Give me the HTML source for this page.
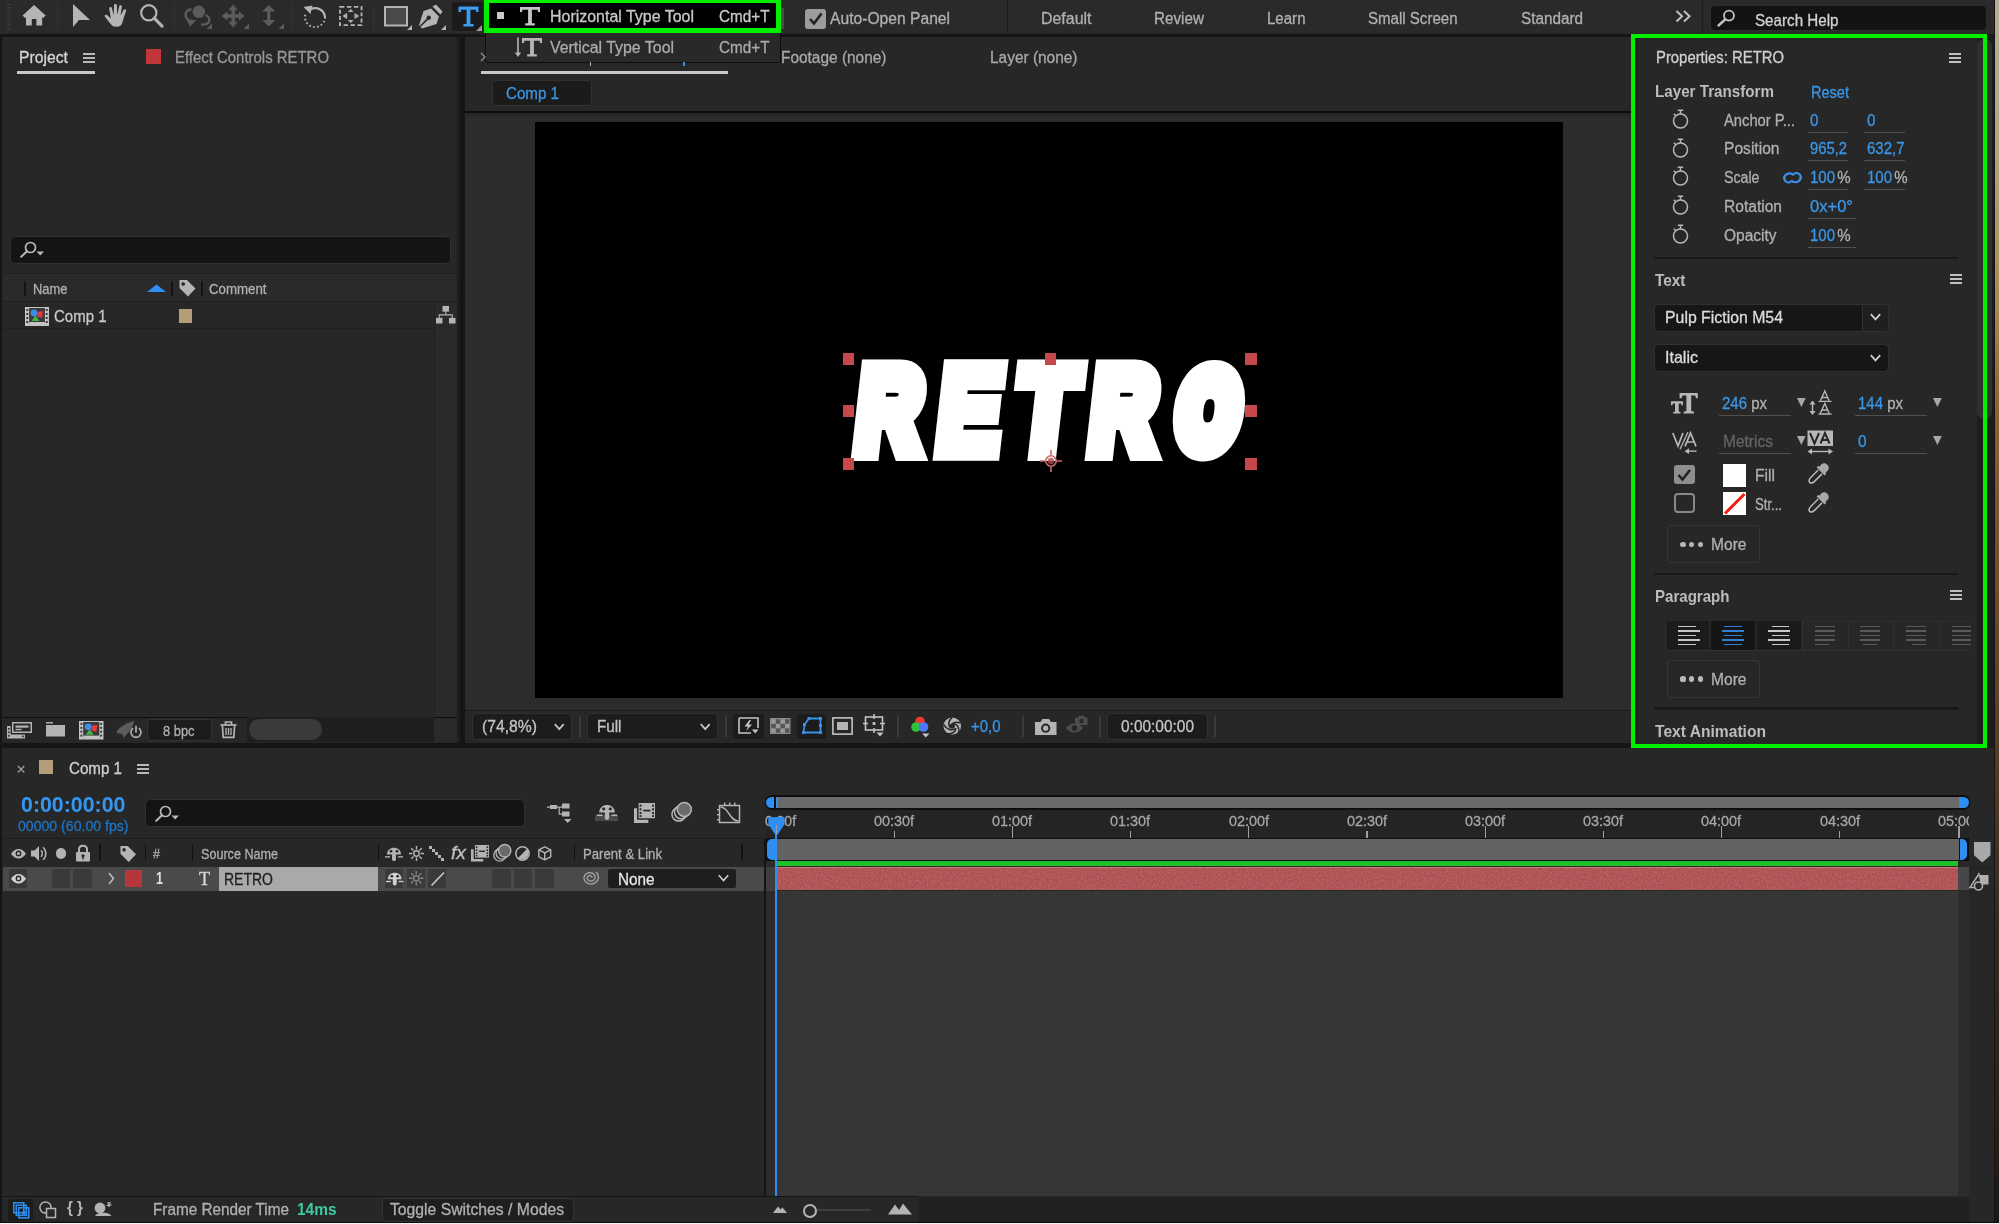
<!DOCTYPE html>
<html><head><meta charset="utf-8"><title>After Effects</title><style>
html,body{margin:0;padding:0;background:#151515;}
body{width:1999px;height:1224px;overflow:hidden;position:relative;font-family:"Liberation Sans",sans-serif;}
#r{position:absolute;left:0;top:0;width:1999px;height:1224px;overflow:hidden;}
#r div,#r svg,#r span.t{position:absolute;}
#r svg{overflow:visible;}
.t{white-space:pre;transform-origin:0 50%;-webkit-text-stroke:0.3px currentColor;}
#retro span{position:absolute;white-space:pre;color:#fff;font-family:"Liberation Sans",sans-serif;font-weight:700;transform-origin:0 0;-webkit-text-stroke:20px #fff;paint-order:stroke fill;}
</style></head><body><div id="r">
<div style="left:0.00px;top:0.00px;width:1999.00px;height:1224.00px;background:#151515;"></div>
<div style="left:0.00px;top:0.00px;width:1995.00px;height:33.50px;background:#2a2a2a;"></div>
<div style="left:2.00px;top:37.00px;width:457.50px;height:705.50px;background:#272727;"></div>
<div style="left:465.00px;top:37.00px;width:1167.00px;height:705.50px;background:#272727;"></div>
<div style="left:1631.00px;top:37.00px;width:364.00px;height:711.00px;background:#1c1c1c;"></div>
<div style="left:2.00px;top:748.00px;width:1992.00px;height:474.00px;background:#272727;"></div>
<div style="left:1995.00px;top:0.00px;width:4.00px;height:1224.00px;background:linear-gradient(#b5ad98 0px,#b0a482 150px,#a58a50 306px,#8c6438 400px,#7c5632 500px,#6a492c 612px,#553b27 760px,#38291f 918px,#2a211b 1100px,#1c1714 1224px);"></div>
<div style="left:1993.50px;top:0.00px;width:1.80px;height:1224.00px;background:#151311;"></div>
<div style="left:0.00px;top:1222.60px;width:1999.00px;height:1.40px;background:#f4f4f4;"></div>
<div style="left:0.00px;top:1221.50px;width:1999.00px;height:1.10px;background:#0c0c0c;"></div>
<div style="left:7.00px;top:4.00px;width:4.00px;height:1.20px;background:#3b3b3b;"></div>
<div style="left:7.00px;top:6.50px;width:4.00px;height:1.20px;background:#3b3b3b;"></div>
<div style="left:7.00px;top:9.00px;width:4.00px;height:1.20px;background:#3b3b3b;"></div>
<div style="left:7.00px;top:11.50px;width:4.00px;height:1.20px;background:#3b3b3b;"></div>
<div style="left:7.00px;top:14.00px;width:4.00px;height:1.20px;background:#3b3b3b;"></div>
<div style="left:7.00px;top:16.50px;width:4.00px;height:1.20px;background:#3b3b3b;"></div>
<div style="left:7.00px;top:19.00px;width:4.00px;height:1.20px;background:#3b3b3b;"></div>
<div style="left:7.00px;top:21.50px;width:4.00px;height:1.20px;background:#3b3b3b;"></div>
<div style="left:7.00px;top:24.00px;width:4.00px;height:1.20px;background:#3b3b3b;"></div>
<div style="left:7.00px;top:26.50px;width:4.00px;height:1.20px;background:#3b3b3b;"></div>
<div style="left:7.00px;top:29.00px;width:4.00px;height:1.20px;background:#3b3b3b;"></div>
<svg style="left:22.00px;top:4.40px;" width="24.20" height="22.00" viewBox="0 0 24 22" preserveAspectRatio="none"><path d="M12 1 L0.5 11.5 L3 14 L4 13 L4 21.5 L9.7 21.5 L9.7 15 L14.3 15 L14.3 21.5 L20 21.5 L20 13 L21 14 L23.5 11.5 Z" fill="#b4b4b4"/></svg>
<div style="left:57.00px;top:3.00px;width:1.00px;height:28.00px;background:#333;"></div>
<svg style="left:72.00px;top:3.20px;" width="19.00" height="25.00" viewBox="0 0 19 25" preserveAspectRatio="none"><path d="M1 1 L1 24 L7 17 L18 17 Z" fill="#b4b4b4"/></svg>
<svg style="left:103.50px;top:3.20px;" width="25.00" height="24.00" viewBox="0 0 24 24" preserveAspectRatio="none"><g fill="#b4b4b4"><path d="M9 23.5 C6 21 3.5 17 0.8 13.5 C0 12.3 1.8 11 3.2 12.2 L6.5 15.5 L5 5.5 C4.8 3.6 7.2 3.3 7.6 5.2 L9.2 12 L9.6 2.5 C9.7 0.6 12.3 0.6 12.4 2.5 L12.6 11.8 L14.6 3.4 C15 1.6 17.5 2.1 17.2 4 L15.8 12.6 L18.8 7 C19.7 5.4 21.9 6.5 21.2 8.2 C19.8 12 18.6 15.5 17.8 19 C17.3 21.5 16 23.5 13 23.8 Z"/></g></svg>
<svg style="left:139.00px;top:3.30px;" width="25.50" height="24.50" viewBox="0 0 26 25" preserveAspectRatio="none"><circle cx="10" cy="10" r="7.8" fill="none" stroke="#b4b4b4" stroke-width="2.2"/><path d="M15.5 15.5 L23.5 23.5" stroke="#b4b4b4" stroke-width="3.2" stroke-linecap="round"/></svg>
<div style="left:174.00px;top:3.00px;width:1.00px;height:28.00px;background:#333;"></div>
<svg style="left:183.00px;top:4.00px;" width="29.00" height="25.00" viewBox="0 0 29 25" preserveAspectRatio="none"><circle cx="15.8" cy="7.8" r="6.2" fill="#5c5c5c"/><g fill="none" stroke="#5c5c5c" stroke-width="2.4"><path d="M8.5 5.2 C0.5 6.5 1 14.5 7.5 17"/><path d="M22.5 11 C28.5 13.5 27.5 21.5 18 20.5"/></g><path d="M3.2 15.2 L13.2 16.2 L7 22.5 Z" fill="#5c5c5c"/><path d="M29 19.5 L29 25 L23.5 25 Z" fill="#5c5c5c"/></svg>
<svg style="left:221.00px;top:4.00px;" width="28.00" height="25.00" viewBox="0 0 28 25" preserveAspectRatio="none"><g fill="#5c5c5c"><path d="M12.2 0.5 L17 6.3 L13.9 6.3 L13.9 10.3 L17.9 10.3 L17.9 7.2 L23.7 12 L17.9 16.8 L17.9 13.7 L13.9 13.7 L13.9 17.7 L17 17.7 L12.2 23.5 L7.4 17.7 L10.5 17.7 L10.5 13.7 L6.5 13.7 L6.5 16.8 L0.7 12 L6.5 7.2 L6.5 10.3 L10.5 10.3 L10.5 6.3 L7.4 6.3 Z"/><path d="M28 19.5 L28 25 L22.5 25 Z"/></g></svg>
<svg style="left:259.00px;top:4.00px;" width="25.00" height="25.00" viewBox="0 0 25 25" preserveAspectRatio="none"><g fill="#5c5c5c"><path d="M9.8 1 L16.4 7.5 L11.4 7.5 L11.4 16 L16.4 16 L9.8 22.5 L3.2 16 L8.2 16 L8.2 7.5 L3.2 7.5 Z"/><path d="M25 19.5 L25 25 L19.5 25 Z"/></g></svg>
<div style="left:292.00px;top:3.00px;width:1.00px;height:28.00px;background:#333;"></div>
<svg style="left:302.00px;top:4.00px;" width="26.00" height="25.00" viewBox="0 0 26 25" preserveAspectRatio="none"><path d="M8.5 5.2 A10 10 0 0 1 23 13" fill="none" stroke="#b4b4b4" stroke-width="2.2"/><path d="M1.5 3 L10.5 1.5 L8.5 10 Z" fill="#b4b4b4"/><path d="M23 13 A10 10 0 1 1 3.5 10" fill="none" stroke="#b4b4b4" stroke-width="2" stroke-dasharray="1.6 2.4"/></svg>
<svg style="left:338.50px;top:6.00px;" width="23.50" height="20.00" viewBox="0 0 24 23" preserveAspectRatio="none"><g fill="none" stroke="#b4b4b4" stroke-width="1.9" stroke-dasharray="4.5 2.6"><rect x="1" y="1" width="22" height="21"/></g><g fill="#b4b4b4"><path d="M12 3.5 L15 7 L9 7 Z"/><path d="M12 19.5 L15 16 L9 16 Z"/><path d="M3.5 11.5 L7 8.5 L7 14.5 Z"/><path d="M20.5 11.5 L17 8.5 L17 14.5 Z"/><rect x="7" y="8.5" width="1.3" height="6"/><rect x="15.7" y="8.5" width="1.3" height="6"/></g></svg>
<div style="left:373.00px;top:3.00px;width:1.00px;height:28.00px;background:#333;"></div>
<svg style="left:383.00px;top:5.00px;" width="29.00" height="25.00" viewBox="0 0 29 25" preserveAspectRatio="none"><rect x="2" y="2" width="22" height="18.5" fill="#4a4a4a" stroke="#b4b4b4" stroke-width="2"/><path d="M29 20 L29 25 L24 25 Z" fill="#b4b4b4"/></svg>
<svg style="left:419.00px;top:4.00px;" width="27.00" height="26.00" viewBox="0 0 27 26" preserveAspectRatio="none"><g fill="#b4b4b4"><path d="M13.5 2.5 L17 0.5 L23.5 7.5 L21.5 10.5 Z"/><path d="M12 4.5 L20 12.5 L17.5 20 L3 24.5 L1.5 23 L9 15.8 A2.2 2.2 0 1 0 7.7 14.5 L0.6 22 L0 21.5 L4.5 7 Z"/><path d="M27 21 L27 26 L22 26 Z"/></g></svg>
<div style="left:452.00px;top:2.00px;width:31.00px;height:29.00px;background:#1b1b1b;border-radius:3px;"></div>
<svg style="left:457.50px;top:5.50px;" width="21.00" height="21.00" viewBox="0 0 21 21" preserveAspectRatio="none"><path d="M0.5 0.5 L20.5 0.5 L20.5 6 L18 6 L18 3.8 L12.4 3.8 L12.4 18 L15.6 18 L15.6 20.5 L5.4 20.5 L5.4 18 L8.6 18 L8.6 3.8 L3 3.8 L3 6 L0.5 6 Z" fill="#3d9bf0"/></svg>
<svg style="left:476.00px;top:25.00px;" width="6.00" height="6.00" viewBox="0 0 6 6" preserveAspectRatio="none"><path d="M6 0 L6 6 L0 6 Z" fill="#9a9a9a"/></svg>
<div style="left:484.50px;top:30.00px;width:296.00px;height:32.80px;background:#0d0d0d;border-radius:0 0 3px 3px;"></div>
<div style="left:486.00px;top:30.00px;width:293.50px;height:31.50px;background:#292929;"></div>
<div style="left:483.60px;top:-2.00px;width:297.00px;height:35.00px;background:#000;box-sizing:border-box;border:5px solid #00f000;"></div>
<div style="left:496.50px;top:12.30px;width:7.30px;height:6.50px;background:#cacaca;"></div>
<svg style="left:519.00px;top:6.00px;" width="22.00" height="20.00" viewBox="0 0 22 20" preserveAspectRatio="none"><path d="M1 1 L21 1 L21 6 L18.8 6 L18.8 3.8 L12.9 3.8 L12.9 17.2 L15.8 17.2 L15.8 19.6 L6.2 19.6 L6.2 17.2 L9.1 17.2 L9.1 3.8 L3.2 3.8 L3.2 6 L1 6 Z" fill="#c4c4c4"/></svg>
<span class="t" style="left:550.00px;top:6.50px;font-size:16px;line-height:20px;color:#c8c8c8;transform:scaleX(0.9973);">Horizontal Type Tool</span>
<span class="t" style="left:719.00px;top:6.50px;font-size:16px;line-height:20px;color:#c8c8c8;transform:scaleX(0.9546);">Cmd+T</span>
<svg style="left:514.00px;top:37.00px;" width="28.00" height="21.00" viewBox="0 0 28 21" preserveAspectRatio="none"><path d="M8 1 L28 1 L28 6 L25.8 6 L25.8 3.8 L19.9 3.8 L19.9 17.2 L22.8 17.2 L22.8 19.6 L13.2 19.6 L13.2 17.2 L16.1 17.2 L16.1 3.8 L10.2 3.8 L10.2 6 L8 6 Z" fill="#b4b4b4"/><path d="M3.2 0.5 L4.8 0.5 L4.8 15.5 L7.2 15.5 L4 20 L0.8 15.5 L3.2 15.5 Z" fill="#b4b4b4"/></svg>
<span class="t" style="left:550.00px;top:37.50px;font-size:16px;line-height:20px;color:#aaaaaa;transform:scaleX(0.9934);">Vertical Type Tool</span>
<span class="t" style="left:719.00px;top:37.50px;font-size:16px;line-height:20px;color:#aaaaaa;transform:scaleX(0.9546);">Cmd+T</span>
<div style="left:781.00px;top:8.00px;width:2.50px;height:21.00px;background:#4a4a4a;"></div>
<div style="left:805.00px;top:9.00px;width:21.00px;height:19.50px;background:#9c9c9c;border-radius:3px;"></div>
<svg style="left:805.00px;top:9.00px;" width="21.00" height="19.50" viewBox="0 0 21 19.5" preserveAspectRatio="none"><path d="M5 10 L9 14.5 L16.5 4.5" fill="none" stroke="#222" stroke-width="2.6"/></svg>
<span class="t" style="left:830.00px;top:9.00px;font-size:16px;line-height:20px;color:#b0b0b0;transform:scaleX(0.9776);">Auto-Open Panel</span>
<div style="left:1007.00px;top:0.00px;width:1.00px;height:33.00px;background:#1c1c1c;"></div>
<span class="t" style="left:1040.50px;top:9.00px;font-size:16px;line-height:20px;color:#b0b0b0;transform:scaleX(0.9961);">Default</span>
<span class="t" style="left:1154.00px;top:9.00px;font-size:16px;line-height:20px;color:#b0b0b0;transform:scaleX(0.9531);">Review</span>
<span class="t" style="left:1267.00px;top:9.00px;font-size:16px;line-height:20px;color:#b0b0b0;transform:scaleX(0.9408);">Learn</span>
<span class="t" style="left:1368.00px;top:9.00px;font-size:16px;line-height:20px;color:#b0b0b0;transform:scaleX(0.9406);">Small Screen</span>
<span class="t" style="left:1521.00px;top:9.00px;font-size:16px;line-height:20px;color:#b0b0b0;transform:scaleX(0.9547);">Standard</span>
<svg style="left:1675.00px;top:10.00px;" width="16.00" height="12.50" viewBox="0 0 16 12" preserveAspectRatio="none"><path d="M1.5 1 L7 6 L1.5 11 M9 1 L14.5 6 L9 11" fill="none" stroke="#c0c0c0" stroke-width="2"/></svg>
<div style="left:1702.00px;top:0.00px;width:1.00px;height:33.00px;background:#1c1c1c;"></div>
<div style="left:1711.00px;top:6.00px;width:275.00px;height:24.00px;background:#131313;border-radius:4px;box-shadow:0 0 0 1px #2d2d2d;"></div>
<svg style="left:1717.00px;top:9.00px;" width="19.00" height="18.00" viewBox="0 0 19 18" preserveAspectRatio="none"><circle cx="12" cy="6.6" r="5" fill="none" stroke="#c4c4c4" stroke-width="1.8"/><path d="M8.3 10.3 L1.5 16.5" stroke="#c4c4c4" stroke-width="2.4" stroke-linecap="round"/></svg>
<span class="t" style="left:1754.50px;top:9.50px;font-size:16.5px;line-height:21px;color:#d2d2d2;transform:scaleX(0.9196);">Search Help</span>
<span class="t" style="left:19.00px;top:47.00px;font-size:16.5px;line-height:21px;color:#d6d6d6;transform:scaleX(0.9541);">Project</span>
<div style="left:83.00px;top:53.00px;width:12.00px;height:2.00px;background:#b8b8b8;"></div>
<div style="left:83.00px;top:57.00px;width:12.00px;height:2.00px;background:#b8b8b8;"></div>
<div style="left:83.00px;top:61.00px;width:12.00px;height:2.00px;background:#b8b8b8;"></div>
<div style="left:17.00px;top:71.00px;width:78.00px;height:3.00px;background:#c8c8c8;"></div>
<div style="left:146.00px;top:49.00px;width:14.50px;height:14.50px;background:#c0373b;"></div>
<span class="t" style="left:175.00px;top:47.50px;font-size:16px;line-height:20px;color:#989898;transform:scaleX(0.9328);">Effect Controls RETRO</span>
<div style="left:11.00px;top:237.00px;width:439.00px;height:26.00px;background:#141414;border-radius:4px;box-shadow:0 0 0 1px #303030;"></div>
<svg style="left:20.00px;top:241.00px;" width="26.00" height="17.00" viewBox="0 0 26 17" preserveAspectRatio="none"><circle cx="10.5" cy="6.5" r="5" fill="none" stroke="#b8b8b8" stroke-width="1.7"/><path d="M7 10.3 L1.2 15.8" stroke="#b8b8b8" stroke-width="2" stroke-linecap="round"/><path d="M16.5 10.5 L24 10.5 L20.2 14.5 Z" fill="#b8b8b8"/></svg>
<div style="left:3.00px;top:272.50px;width:454.00px;height:1.50px;background:#1f1f1f;"></div>
<div style="left:3.00px;top:274.00px;width:454.00px;height:27.00px;background:#2a2a2a;"></div>
<div style="left:3.00px;top:301.00px;width:454.00px;height:1.00px;background:#202020;"></div>
<div style="left:24.00px;top:280.50px;width:1.50px;height:15.50px;background:#141414;"></div>
<span class="t" style="left:33.00px;top:280.00px;font-size:14.5px;line-height:18px;color:#b0b0b0;transform:scaleX(0.8919);">Name</span>
<svg style="left:147.00px;top:284.00px;" width="19.00" height="9.00" viewBox="0 0 19 9" preserveAspectRatio="none"><path d="M0 8 L9.5 0.5 L19 8 Z" fill="#2f8ff0"/></svg>
<div style="left:171.00px;top:280.50px;width:1.50px;height:15.50px;background:#141414;"></div>
<svg style="left:177.50px;top:278.50px;" width="18.50" height="18.50" viewBox="0 0 18.5 18.5" preserveAspectRatio="none"><path d="M1.5 1 L9 1 L17.5 9.5 L10 17.5 L1.5 9 Z M5.2 3.2 A1.8 1.8 0 1 0 5.21 3.2 Z" fill="#b4b4b4" fill-rule="evenodd"/></svg>
<div style="left:201.00px;top:280.50px;width:1.50px;height:15.50px;background:#141414;"></div>
<span class="t" style="left:209.00px;top:280.00px;font-size:14.5px;line-height:18px;color:#b0b0b0;transform:scaleX(0.9148);">Comment</span>
<svg style="left:25.00px;top:306.50px;" width="24.00" height="19.00" viewBox="0 0 24 19" preserveAspectRatio="none"><rect x="0.5" y="0.5" width="23" height="18" fill="#3a3a3a" stroke="#c4c4c4" stroke-width="1"/>
<rect x="0.5" y="0.5" width="3.6" height="18" fill="#c4c4c4"/><rect x="19.9" y="0.5" width="3.6" height="18" fill="#c4c4c4"/>
<g fill="#333"><rect x="1.4" y="2" width="1.8" height="2"/><rect x="1.4" y="6" width="1.8" height="2"/><rect x="1.4" y="10" width="1.8" height="2"/><rect x="1.4" y="14" width="1.8" height="2"/><rect x="20.8" y="2" width="1.8" height="2"/><rect x="20.8" y="6" width="1.8" height="2"/><rect x="20.8" y="10" width="1.8" height="2"/><rect x="20.8" y="14" width="1.8" height="2"/></g>
<rect x="4.1" y="15" width="15.8" height="3.5" fill="#c4c4c4"/>
<circle cx="9" cy="6" r="3.4" fill="#3a8fe8"/><path d="M12 5 L18 4 L17 11 L12.5 10 Z" fill="#e03a3a"/><path d="M10.5 8.5 L14.5 14 L6.5 14 Z" fill="#3fb84a"/></svg>
<span class="t" style="left:53.50px;top:306.00px;font-size:17px;line-height:21px;color:#c8c8c8;transform:scaleX(0.8820);">Comp 1</span>
<div style="left:178.50px;top:309.00px;width:13.50px;height:13.50px;background:#b49e7a;"></div>
<div style="left:3.00px;top:328.00px;width:431.00px;height:1.00px;background:#1f1f1f;"></div>
<div style="left:434.00px;top:302.00px;width:23.00px;height:440.00px;background:#2a2a2a;"></div>
<div style="left:433.50px;top:302.00px;width:1.00px;height:415.00px;background:#202020;"></div>
<svg style="left:436.00px;top:306.00px;" width="19.50" height="17.50" viewBox="0 0 19.5 17" preserveAspectRatio="none"><g fill="#b4b4b4"><rect x="6.5" y="0" width="6.5" height="5.5"/><rect x="0" y="11.5" width="6.5" height="5.5"/><rect x="13" y="11.5" width="6.5" height="5.5"/><path d="M9.2 5 L10.3 5 L10.3 8 L16.8 8 L16.8 12 L15.7 12 L15.7 9.2 L3.8 9.2 L3.8 12 L2.7 12 L2.7 8 L9.2 8 Z"/></g></svg>
<div style="left:457.00px;top:37.00px;width:2.50px;height:705.50px;background:#1d1d1d;"></div>
<div style="left:3.00px;top:716.50px;width:244.00px;height:1.50px;background:#0e0e0e;"></div>
<div style="left:434.00px;top:716.50px;width:23.00px;height:1.50px;background:#0e0e0e;"></div>
<div style="left:247.00px;top:717.00px;width:187.00px;height:25.00px;background:#1f1f1f;"></div>
<div style="left:249.00px;top:718.50px;width:73.00px;height:21.50px;background:#3a3a3a;border-radius:11px;"></div>
<svg style="left:6.50px;top:722.00px;" width="25.00" height="16.50" viewBox="0 0 25 16.5" preserveAspectRatio="none"><g fill="#b4b4b4"><path d="M5 0 L25 0 L25 11 L5 11 Z M6.5 1.5 L6.5 9.5 L23.5 9.5 L23.5 1.5 Z" fill-rule="evenodd"/><rect x="8.5" y="3.5" width="13" height="2.2"/><rect x="8.5" y="6.8" width="6" height="1.4"/><path d="M0 4 L3.6 4 L3.6 12.4 L18 12.4 L18 16.5 L0 16.5 Z"/></g><g fill="#272727"><rect x="1" y="6" width="1.6" height="1.6"/><rect x="1" y="9.5" width="1.6" height="1.6"/><rect x="1" y="13" width="1.6" height="1.6"/><rect x="15" y="13.6" width="1.6" height="1.6"/></g></svg>
<svg style="left:45.50px;top:721.50px;" width="19.00" height="14.50" viewBox="0 0 19 14.5" preserveAspectRatio="none"><path d="M0 0 L7 0 L7 1.5 L0 1.5 Z M0 3 L19 3 L19 14.5 L0 14.5 Z" fill="#b4b4b4"/></svg>
<svg style="left:79.00px;top:721.00px;" width="24.50" height="18.50" viewBox="0 0 24 19" preserveAspectRatio="none"><rect x="0.5" y="0.5" width="23" height="18" fill="#3a3a3a" stroke="#c4c4c4" stroke-width="1"/>
<rect x="0.5" y="0.5" width="3.6" height="18" fill="#c4c4c4"/><rect x="19.9" y="0.5" width="3.6" height="18" fill="#c4c4c4"/>
<g fill="#333"><rect x="1.4" y="2" width="1.8" height="2"/><rect x="1.4" y="6" width="1.8" height="2"/><rect x="1.4" y="10" width="1.8" height="2"/><rect x="1.4" y="14" width="1.8" height="2"/><rect x="20.8" y="2" width="1.8" height="2"/><rect x="20.8" y="6" width="1.8" height="2"/><rect x="20.8" y="10" width="1.8" height="2"/><rect x="20.8" y="14" width="1.8" height="2"/></g>
<rect x="4.1" y="15" width="15.8" height="3.5" fill="#c4c4c4"/>
<circle cx="9" cy="6" r="3.4" fill="#3a8fe8"/><path d="M12 5 L18 4 L17 11 L12.5 10 Z" fill="#e03a3a"/><path d="M10.5 8.5 L14.5 14 L6.5 14 Z" fill="#3fb84a"/></svg>
<svg style="left:116.00px;top:720.00px;" width="25.50" height="19.00" viewBox="0 0 25.5 19" preserveAspectRatio="none"><path d="M1 11 C5 6 10 3 18 1 C17 7 14 12 9 16 L7.5 18 L6.5 14.5 L3.5 13.5 L0.5 13 Z" fill="#5c5c5c"/><path d="M20 6.5 L20 12" stroke="#a8a8a8" stroke-width="1.8" stroke-linecap="round"/><path d="M16.6 8.6 A5 5 0 1 0 23.4 8.6" fill="none" stroke="#a8a8a8" stroke-width="1.8" stroke-linecap="round"/></svg>
<div style="left:147.50px;top:720.00px;width:63.00px;height:19.50px;background:#1c1c1c;border-radius:3px;box-shadow:0 0 0 1px #333;"></div>
<span class="t" style="left:163.00px;top:721.50px;font-size:14.5px;line-height:18px;color:#b0b0b0;transform:scaleX(0.8880);">8 bpc</span>
<svg style="left:220.00px;top:720.50px;" width="17.00" height="17.50" viewBox="0 0 17 17.5" preserveAspectRatio="none"><g fill="none" stroke="#b4b4b4" stroke-width="1.7"><path d="M0.5 4 L16.5 4"/><path d="M5.5 3.6 L5.5 1 L11.5 1 L11.5 3.6"/><path d="M2.4 4.5 L3.2 16.4 L13.8 16.4 L14.6 4.5"/><path d="M6 7 L6 14 M8.5 7 L8.5 14 M11 7 L11 14" stroke-width="1.3"/></g></svg>
<svg style="left:480.00px;top:52.00px;" width="6.00" height="10.00" viewBox="0 0 6 10" preserveAspectRatio="none"><path d="M1 1 L5 5 L1 9" fill="none" stroke="#8a8a8a" stroke-width="1.4"/></svg>
<div style="left:481.00px;top:71.00px;width:247.00px;height:3.00px;background:#c8c8c8;"></div>
<div style="left:589.50px;top:62.00px;width:1.50px;height:3.50px;background:#b0b0b0;"></div>
<div style="left:683.00px;top:62.00px;width:1.50px;height:4.00px;background:#3a8fe8;"></div>
<span class="t" style="left:780.50px;top:47.50px;font-size:16px;line-height:20px;color:#a8a8a8;transform:scaleX(0.9643);">Footage (none)</span>
<span class="t" style="left:989.50px;top:47.50px;font-size:16px;line-height:20px;color:#a8a8a8;transform:scaleX(0.9645);">Layer (none)</span>
<div style="left:493.00px;top:81.00px;width:98.00px;height:23.50px;background:#1b1b1b;border-radius:3px;box-shadow:0 0 0 1px #303030;"></div>
<span class="t" style="left:506.00px;top:83.00px;font-size:16.5px;line-height:21px;color:#3a96e6;transform:scaleX(0.9173);">Comp 1</span>
<div style="left:465.00px;top:111.00px;width:1167.00px;height:2.00px;background:#0c0c0c;"></div>
<div style="left:465.00px;top:113.00px;width:1167.00px;height:596.50px;background:#2c2c2c;background-image:linear-gradient(#242424 0,#2c2c2c 5px);"></div>
<div style="left:535.00px;top:122.00px;width:1027.50px;height:575.60px;background:#000;"></div>
<div style="left:465.00px;top:709.50px;width:1167.00px;height:1.50px;background:#1a1a1a;"></div>
<div id="retro" style="left:0;top:0;width:1999px;height:461.4px;transform-origin:0 461.4px;transform:skewX(-6.46deg);"><span style="left:852.06px;top:351.10px;font-size:118.46px;line-height:118.46px;-webkit-text-stroke-width:20.0px;transform:scaleX(0.7511);">R</span><span style="left:933.45px;top:349.27px;font-size:122.09px;line-height:122.09px;-webkit-text-stroke-width:17.5px;transform:scaleX(0.7733);">E</span><span style="left:1012.29px;top:349.64px;font-size:121.37px;line-height:121.37px;-webkit-text-stroke-width:18.0px;transform:scaleX(0.7969);">T</span><span style="left:1085.57px;top:351.10px;font-size:118.46px;line-height:118.46px;-webkit-text-stroke-width:20.0px;transform:scaleX(0.7564);">R</span><span style="left:1173.53px;top:357.75px;font-size:105.23px;line-height:105.23px;-webkit-text-stroke-width:27.0px;transform:scaleX(0.7112);">O</span></div>
<div style="left:842.50px;top:353.20px;width:11.60px;height:11.60px;background:#c8474a;"></div>
<div style="left:842.50px;top:405.20px;width:11.60px;height:11.60px;background:#c8474a;"></div>
<div style="left:842.50px;top:458.20px;width:11.60px;height:11.60px;background:#c8474a;"></div>
<div style="left:1044.70px;top:353.20px;width:11.60px;height:11.60px;background:#c8474a;"></div>
<div style="left:1245.20px;top:353.20px;width:11.60px;height:11.60px;background:#c8474a;"></div>
<div style="left:1245.20px;top:405.20px;width:11.60px;height:11.60px;background:#c8474a;"></div>
<div style="left:1245.20px;top:458.20px;width:11.60px;height:11.60px;background:#c8474a;"></div>
<svg style="left:1039.00px;top:449.00px;" width="24.00" height="24.00" viewBox="0 0 24 24" preserveAspectRatio="none"><g stroke="#d06a6c" fill="none" stroke-width="1.6"><circle cx="12" cy="12" r="5.2"/><path d="M12 1 L12 6 M12 18 L12 23 M1 12 L6 12 M18 12 L23 12"/></g><circle cx="12" cy="12" r="3.2" fill="#b84a4c" opacity="0.8"/></svg>
<div style="left:473.00px;top:714.00px;width:98.00px;height:24.50px;background:#1c1c1c;border-radius:4px;box-shadow:0 0 0 1px #313131;"></div>
<span class="t" style="left:482.00px;top:716.50px;font-size:16px;line-height:20px;color:#c4c4c4;transform:scaleX(0.9817);">(74,8%)</span>
<svg style="left:553.50px;top:722.61px;" width="10.50" height="7.78" viewBox="0 0 10.50 7.78" preserveAspectRatio="none"><path d="M0.8 1.2 L5.25 6.18 L9.70 1.2" fill="none" stroke="#c4c4c4" stroke-width="1.8"/></svg>
<div style="left:578.50px;top:716.00px;width:2.00px;height:21.00px;background:#3a3a3a;"></div>
<div style="left:588.00px;top:714.00px;width:128.50px;height:24.50px;background:#1c1c1c;border-radius:4px;box-shadow:0 0 0 1px #313131;"></div>
<span class="t" style="left:597.00px;top:716.50px;font-size:16px;line-height:20px;color:#c4c4c4;transform:scaleX(0.9503);">Full</span>
<svg style="left:699.50px;top:722.61px;" width="10.50" height="7.78" viewBox="0 0 10.50 7.78" preserveAspectRatio="none"><path d="M0.8 1.2 L5.25 6.18 L9.70 1.2" fill="none" stroke="#c4c4c4" stroke-width="1.8"/></svg>
<div style="left:724.50px;top:716.00px;width:2.00px;height:21.00px;background:#3a3a3a;"></div>
<div style="left:733.00px;top:713.50px;width:30.50px;height:25.50px;background:#1c1c1c;border-radius:3px;"></div>
<svg style="left:738.00px;top:716.50px;" width="21.00" height="17.50" viewBox="0 0 21 17.5" preserveAspectRatio="none"><path d="M1 1 L20 1 L20 11 M13 16 L1 16 L1 1" fill="none" stroke="#c4c4c4" stroke-width="1.6"/><path d="M11.5 3 L6.5 9.5 L10 9.5 L8 14 L14 7.5 L10.6 7.5 L13 3 Z" fill="#c4c4c4"/><path d="M14 12.5 L20.5 12.5 L17.2 16.5 Z" fill="#c4c4c4"/></svg>
<svg style="left:769.50px;top:718.00px;" width="20.50" height="16.00" viewBox="0 0 20.5 16" preserveAspectRatio="none"><rect x="0.6" y="0.6" width="19.3" height="14.8" fill="#555" stroke="#8a8a8a" stroke-width="1.2"/><g fill="#9a9a9a"><rect x="1.2" y="1.2" width="4.6" height="4.6"/><rect x="10.4" y="1.2" width="4.6" height="4.6"/><rect x="5.8" y="5.8" width="4.6" height="4.6"/><rect x="15" y="5.8" width="4.4" height="4.6"/><rect x="1.2" y="10.4" width="4.6" height="4.4"/><rect x="10.4" y="10.4" width="4.6" height="4.4"/></g></svg>
<div style="left:797.00px;top:713.50px;width:28.50px;height:25.50px;background:#1c1c1c;border-radius:3px;"></div>
<svg style="left:800.50px;top:716.00px;" width="22.00" height="19.00" viewBox="0 0 22 19" preserveAspectRatio="none"><path d="M2.5 16.5 L3.5 8.5 L8 2.5 L19.5 2.5 L19.5 16.5 Z" fill="none" stroke="#3a8fe8" stroke-width="1.8"/><g fill="#3a8fe8"><rect x="1" y="15" width="3" height="3"/><rect x="18" y="15" width="3" height="3"/><rect x="18" y="1" width="3" height="3"/><rect x="6.5" y="1" width="3" height="3"/><rect x="2" y="7" width="3" height="3"/><rect x="18" y="8" width="3" height="3"/></g></svg>
<svg style="left:832.00px;top:717.00px;" width="21.00" height="18.00" viewBox="0 0 21 18" preserveAspectRatio="none"><rect x="0.9" y="0.9" width="19.2" height="16.2" fill="none" stroke="#c4c4c4" stroke-width="1.6"/><rect x="5" y="5" width="11" height="8" fill="#b4b4b4"/></svg>
<svg style="left:863.00px;top:714.00px;" width="22.00" height="22.50" viewBox="0 0 22 22.5" preserveAspectRatio="none"><g stroke="#c4c4c4" stroke-width="1.6" fill="none"><rect x="2.5" y="3" width="17" height="13"/><path d="M11 0 L11 5 M11 14 L11 19 M0 9.5 L5 9.5 M17 9.5 L22 9.5"/></g><rect x="9.6" y="8.1" width="2.8" height="2.8" fill="#c4c4c4"/><path d="M13.5 18.5 L20.5 18.5 L17 22.5 Z" fill="#c4c4c4"/></svg>
<div style="left:896.50px;top:716.00px;width:2.00px;height:21.00px;background:#3a3a3a;"></div>
<svg style="left:911.00px;top:715.50px;" width="19.00" height="22.50" viewBox="0 0 19 22.5" preserveAspectRatio="none"><circle cx="9" cy="5.5" r="4.8" fill="#f03a30"/><circle cx="5" cy="11" r="4.8" fill="#2fc23a"/><circle cx="12.5" cy="11" r="4.8" fill="#4a78ff"/><path d="M11 17.5 L18.5 17.5 L14.8 21.5 Z" fill="#c4c4c4"/></svg>
<svg style="left:942.50px;top:716.50px;" width="18.50" height="18.00" viewBox="0 0 18 18" preserveAspectRatio="none"><circle cx="9" cy="9" r="8.6" fill="#b4b4b4"/><g stroke="#272727" stroke-width="1.5" fill="none"><path d="M9 0.2 C5 4 5 8 7.5 11"/><path d="M17.2 6 C12 4 8.5 6 7.2 9.5"/><path d="M15 16 C16.5 10.5 14 7.5 10.5 6.8"/><path d="M4 16.5 C9.5 17.5 12.5 14.5 12.5 11"/><path d="M0.6 7.5 C3.5 12.5 8 13.5 11.5 12"/></g><circle cx="9" cy="9" r="2.6" fill="#272727"/></svg>
<span class="t" style="left:970.50px;top:717.00px;font-size:16px;line-height:20px;color:#3a96e6;transform:scaleX(0.9340);">+0,0</span>
<div style="left:1022.00px;top:716.00px;width:2.00px;height:21.00px;background:#3a3a3a;"></div>
<svg style="left:1035.00px;top:718.50px;" width="21.50" height="16.00" viewBox="0 0 21.5 16" preserveAspectRatio="none"><path d="M0 3 L5.5 3 L7.5 0 L14 0 L16 3 L21.5 3 L21.5 16 L0 16 Z" fill="#b4b4b4"/><circle cx="10.7" cy="9.2" r="4.6" fill="#272727"/><circle cx="10.7" cy="9.2" r="2.6" fill="#b4b4b4"/></svg>
<svg style="left:1066.00px;top:715.00px;" width="22.00" height="20.00" viewBox="0 0 22 20" preserveAspectRatio="none"><g fill="#4c4c4c"><path d="M9 2.5 L12 2.5 L13 0.8 L18 0.8 L19 2.5 L21.5 2.5 L21.5 10 L9 10 Z"/><path d="M0 13 C4 7 13 7 17 13 C13 19 4 19 0 13 Z"/></g><circle cx="15.5" cy="6" r="2.2" fill="#272727"/><circle cx="8.5" cy="13" r="2.8" fill="#272727"/></svg>
<div style="left:1099.00px;top:716.00px;width:2.00px;height:21.00px;background:#3a3a3a;"></div>
<div style="left:1108.00px;top:714.00px;width:99.00px;height:24.50px;background:#1c1c1c;border-radius:4px;box-shadow:0 0 0 1px #313131;"></div>
<span class="t" style="left:1120.50px;top:717.00px;font-size:16px;line-height:20px;color:#c4c4c4;transform:scaleX(0.9653);">0:00:00:00</span>
<div style="left:1213.50px;top:716.00px;width:2.00px;height:21.00px;background:#3a3a3a;"></div>
<div style="left:1632.00px;top:34.00px;width:355.00px;height:713.50px;background:#272727;"></div>
<div style="left:1976.70px;top:34.00px;width:16.80px;height:714.00px;background:#1c1c1c;"></div>
<div style="left:1977.30px;top:39.00px;width:14.70px;height:379.50px;background:#303030;border-radius:7px;"></div>
<div style="left:1631.30px;top:33.80px;width:355.70px;height:713.80px;box-sizing:border-box;border:4.8px solid #00f000;"></div>
<div style="left:1636.10px;top:38.60px;width:1.50px;height:704.20px;background:#202020;"></div>
<span class="t" style="left:1656.00px;top:47.00px;font-size:16.5px;line-height:21px;color:#d0d0d0;transform:scaleX(0.9006);">Properties: RETRO</span>
<div style="left:1949.00px;top:53.00px;width:12.00px;height:2.00px;background:#c0c0c0;"></div>
<div style="left:1949.00px;top:57.00px;width:12.00px;height:2.00px;background:#c0c0c0;"></div>
<div style="left:1949.00px;top:61.00px;width:12.00px;height:2.00px;background:#c0c0c0;"></div>
<span class="t" style="left:1654.50px;top:81.00px;font-size:16.5px;line-height:21px;color:#bcbcbc;font-weight:700;-webkit-text-stroke:0;transform:scaleX(0.9203);">Layer Transform</span>
<span class="t" style="left:1810.50px;top:81.50px;font-size:16.5px;line-height:21px;color:#3a96e6;transform:scaleX(0.8816);">Reset</span>
<svg style="left:1672.10px;top:108.80px;" width="17.00" height="20.00" viewBox="0 0 17 20" preserveAspectRatio="none"><circle cx="8.5" cy="12" r="7" fill="none" stroke="#b8b8b8" stroke-width="1.5"/><path d="M5.8 1.2 L11.2 1.2 M8.5 1.2 L8.5 5 M1.8 4.8 L3.8 6.8" stroke="#b8b8b8" stroke-width="1.5" fill="none"/></svg>
<span class="t" style="left:1723.50px;top:110.60px;font-size:16px;line-height:20px;color:#b0b0b0;transform:scaleX(0.9210);">Anchor P...</span>
<svg style="left:1672.10px;top:137.50px;" width="17.00" height="20.00" viewBox="0 0 17 20" preserveAspectRatio="none"><circle cx="8.5" cy="12" r="7" fill="none" stroke="#b8b8b8" stroke-width="1.5"/><path d="M5.8 1.2 L11.2 1.2 M8.5 1.2 L8.5 5 M1.8 4.8 L3.8 6.8" stroke="#b8b8b8" stroke-width="1.5" fill="none"/></svg>
<span class="t" style="left:1723.50px;top:139.30px;font-size:16px;line-height:20px;color:#b0b0b0;transform:scaleX(0.9750);">Position</span>
<svg style="left:1672.10px;top:166.20px;" width="17.00" height="20.00" viewBox="0 0 17 20" preserveAspectRatio="none"><circle cx="8.5" cy="12" r="7" fill="none" stroke="#b8b8b8" stroke-width="1.5"/><path d="M5.8 1.2 L11.2 1.2 M8.5 1.2 L8.5 5 M1.8 4.8 L3.8 6.8" stroke="#b8b8b8" stroke-width="1.5" fill="none"/></svg>
<span class="t" style="left:1723.50px;top:168.00px;font-size:16px;line-height:20px;color:#b0b0b0;transform:scaleX(0.8869);">Scale</span>
<svg style="left:1672.10px;top:195.00px;" width="17.00" height="20.00" viewBox="0 0 17 20" preserveAspectRatio="none"><circle cx="8.5" cy="12" r="7" fill="none" stroke="#b8b8b8" stroke-width="1.5"/><path d="M5.8 1.2 L11.2 1.2 M8.5 1.2 L8.5 5 M1.8 4.8 L3.8 6.8" stroke="#b8b8b8" stroke-width="1.5" fill="none"/></svg>
<span class="t" style="left:1723.50px;top:196.80px;font-size:16px;line-height:20px;color:#b0b0b0;transform:scaleX(0.9732);">Rotation</span>
<svg style="left:1672.10px;top:223.70px;" width="17.00" height="20.00" viewBox="0 0 17 20" preserveAspectRatio="none"><circle cx="8.5" cy="12" r="7" fill="none" stroke="#b8b8b8" stroke-width="1.5"/><path d="M5.8 1.2 L11.2 1.2 M8.5 1.2 L8.5 5 M1.8 4.8 L3.8 6.8" stroke="#b8b8b8" stroke-width="1.5" fill="none"/></svg>
<span class="t" style="left:1723.50px;top:225.50px;font-size:16px;line-height:20px;color:#b0b0b0;transform:scaleX(0.9679);">Opacity</span>
<span class="t" style="left:1810.00px;top:110.60px;font-size:16px;line-height:20px;color:#3a96e6;transform:scaleX(0.9552);">0</span>
<div style="left:1807.50px;top:132.00px;width:40.50px;height:1.00px;background:#505050;"></div>
<span class="t" style="left:1866.50px;top:110.60px;font-size:16px;line-height:20px;color:#3a96e6;transform:scaleX(0.9552);">0</span>
<div style="left:1864.00px;top:132.00px;width:41.00px;height:1.00px;background:#505050;"></div>
<span class="t" style="left:1810.00px;top:139.30px;font-size:16px;line-height:20px;color:#3a96e6;transform:scaleX(0.9241);">965,2</span>
<div style="left:1807.50px;top:160.00px;width:40.50px;height:1.00px;background:#505050;"></div>
<span class="t" style="left:1866.50px;top:139.30px;font-size:16px;line-height:20px;color:#3a96e6;transform:scaleX(0.9366);">632,7</span>
<div style="left:1864.00px;top:160.00px;width:41.00px;height:1.00px;background:#505050;"></div>
<span class="t" style="left:1810.00px;top:168.00px;font-size:16px;line-height:20px;transform:scaleX(0.9392);"><span style="color:#3a96e6;">100</span><span style="color:#b0b0b0;margin-left:2.2px;">%</span></span>
<div style="left:1807.50px;top:189.00px;width:40.50px;height:1.00px;background:#505050;"></div>
<span class="t" style="left:1866.50px;top:168.00px;font-size:16px;line-height:20px;transform:scaleX(0.9392);"><span style="color:#3a96e6;">100</span><span style="color:#b0b0b0;margin-left:2.2px;">%</span></span>
<div style="left:1864.00px;top:189.00px;width:41.00px;height:1.00px;background:#505050;"></div>
<svg style="left:1783.00px;top:170.50px;" width="19.00" height="13.50" viewBox="0 0 19 13.5" preserveAspectRatio="none"><g fill="none" stroke="#3a8fe8" stroke-width="2.2"><path d="M11 4.3 C8.8 1.6 4.5 1.6 2.3 4.3 C0.6 6.4 0.6 8 2.3 9.9 C4 11.8 6.5 11.8 8 10.5"/><path d="M8 9.2 C10.2 11.9 14.5 11.9 16.7 9.2 C18.4 7.1 18.4 5.5 16.7 3.6 C15 1.7 12.5 1.7 11 3"/></g></svg>
<span class="t" style="left:1810.00px;top:196.80px;font-size:16px;line-height:20px;color:#3a96e6;transform:scaleX(1.0351);">0x+0°</span>
<div style="left:1807.50px;top:218.00px;width:48.50px;height:1.00px;background:#505050;"></div>
<span class="t" style="left:1810.00px;top:225.50px;font-size:16px;line-height:20px;transform:scaleX(0.9392);"><span style="color:#3a96e6;">100</span><span style="color:#b0b0b0;margin-left:2.2px;">%</span></span>
<div style="left:1807.50px;top:247.00px;width:48.50px;height:1.00px;background:#505050;"></div>
<div style="left:1654.00px;top:256.50px;width:303.50px;height:2.30px;background:#181818;"></div>
<span class="t" style="left:1654.50px;top:270.00px;font-size:16.5px;line-height:21px;color:#bcbcbc;font-weight:700;-webkit-text-stroke:0;transform:scaleX(0.9326);">Text</span>
<div style="left:1950.00px;top:274.00px;width:12.00px;height:2.00px;background:#c0c0c0;"></div>
<div style="left:1950.00px;top:278.00px;width:12.00px;height:2.00px;background:#c0c0c0;"></div>
<div style="left:1950.00px;top:282.00px;width:12.00px;height:2.00px;background:#c0c0c0;"></div>
<div style="left:1655.00px;top:304.50px;width:233.00px;height:26.50px;background:#161616;border-radius:4px;box-shadow:0 0 0 1px #303030;"></div>
<div style="left:1862.00px;top:304.50px;width:26.00px;height:26.50px;background:#1f1f1f;border-radius:0 4px 4px 0;border-left:1px solid #303030;box-sizing:border-box;"></div>
<span class="t" style="left:1664.50px;top:307.00px;font-size:16.5px;line-height:21px;color:#dcdcdc;transform:scaleX(0.9602);">Pulp Fiction M54</span>
<svg style="left:1870.00px;top:313.48px;" width="11.00" height="8.05" viewBox="0 0 11.00 8.05" preserveAspectRatio="none"><path d="M0.8 1.2 L5.50 6.45 L10.20 1.2" fill="none" stroke="#d0d0d0" stroke-width="1.8"/></svg>
<div style="left:1655.00px;top:345.00px;width:233.00px;height:26.00px;background:#161616;border-radius:4px;box-shadow:0 0 0 1px #303030;"></div>
<span class="t" style="left:1664.50px;top:347.00px;font-size:16.5px;line-height:21px;color:#dcdcdc;transform:scaleX(0.9727);">Italic</span>
<svg style="left:1870.00px;top:353.98px;" width="11.00" height="8.05" viewBox="0 0 11.00 8.05" preserveAspectRatio="none"><path d="M0.8 1.2 L5.50 6.45 L10.20 1.2" fill="none" stroke="#d0d0d0" stroke-width="1.8"/></svg>
<svg style="left:1671.00px;top:392.50px;" width="27.00" height="21.00" viewBox="0 0 27 21" preserveAspectRatio="none"><g fill="#b8b8b8"><path d="M8.6 0 L26.8 0 L26.8 5.2 L25 5.2 L24.2 2.6 L20.2 2.6 L20.2 18 L23 18.8 L23 20.6 L12.6 20.6 L12.6 18.8 L15.4 18 L15.4 2.6 L11.4 2.6 L10.6 5.2 L8.6 5.2 Z"/><path d="M0 8.2 L12 8.2 L12 12.2 L10.6 12.2 L10.1 10.4 L7.7 10.4 L7.7 18.6 L9.6 19.2 L9.6 20.6 L2.2 20.6 L2.2 19.2 L4.1 18.6 L4.1 10.4 L1.9 10.4 L1.4 12.2 L0 12.2 Z"/></g></svg>
<span class="t" style="left:1722.00px;top:393.50px;font-size:16px;line-height:20px;transform:scaleX(0.9367);"><span style="color:#3a96e6;">246</span><span style="color:#b0b0b0;"> px</span></span>
<div style="left:1719.00px;top:415.00px;width:72.00px;height:1.00px;background:#505050;"></div>
<svg style="left:1797.30px;top:398.00px;" width="8.70" height="9.00" viewBox="0 0 8.70 9.00" preserveAspectRatio="none"><path d="M0 0 L8.70 0 L4.35 9.00 Z" fill="#a8a8a8"/></svg>
<svg style="left:1808.50px;top:389.50px;" width="23.50" height="25.00" viewBox="0 0 23.5 25" preserveAspectRatio="none"><g fill="none" stroke="#b8b8b8" stroke-width="1.4"><path d="M11.5 10.5 L15.8 1 L20 10.5 M13 7.5 L18.6 7.5 M9.5 11.4 L22.5 11.4"/><path d="M11.5 23 L15.8 13.5 L20 23 M13 20 L18.6 20 M9.5 24 L22.5 24"/><path d="M3.5 13 L3.5 23"/></g><path d="M3.5 10.5 L6.6 14.5 L0.4 14.5 Z M3.5 25 L6.6 21 L0.4 21 Z" fill="#b8b8b8"/></svg>
<span class="t" style="left:1857.50px;top:393.50px;font-size:16px;line-height:20px;transform:scaleX(0.9367);"><span style="color:#3a96e6;">144</span><span style="color:#b0b0b0;"> px</span></span>
<div style="left:1854.50px;top:415.00px;width:72.50px;height:1.00px;background:#505050;"></div>
<svg style="left:1933.40px;top:398.00px;" width="8.80" height="9.00" viewBox="0 0 8.80 9.00" preserveAspectRatio="none"><path d="M0 0 L8.80 0 L4.40 9.00 Z" fill="#a8a8a8"/></svg>
<svg style="left:1671.50px;top:432.00px;" width="25.50" height="22.50" viewBox="0 0 25.5 23.5" preserveAspectRatio="none"><g fill="none" stroke="#b8b8b8" stroke-width="1.7"><path d="M0.8 1 L6 14.5 L11 1"/><path d="M13 15 L18.5 1 L24 15 M15 10.5 L22 10.5"/><path d="M16 0 L8 18" stroke-width="1.3"/></g><path d="M24.5 20 L15 20" stroke="#b8b8b8" stroke-width="1.4"/><path d="M12.5 20 L17 17 L17 23 Z" fill="#b8b8b8"/></svg>
<span class="t" style="left:1722.50px;top:431.50px;font-size:16px;line-height:20px;color:#646464;transform:scaleX(0.9698);">Metrics</span>
<div style="left:1719.00px;top:453.00px;width:72.00px;height:1.00px;background:#505050;"></div>
<svg style="left:1797.30px;top:436.00px;" width="8.70" height="9.00" viewBox="0 0 8.70 9.00" preserveAspectRatio="none"><path d="M0 0 L8.70 0 L4.35 9.00 Z" fill="#a8a8a8"/></svg>
<svg style="left:1807.00px;top:429.50px;" width="26.50" height="25.50" viewBox="0 0 26.5 25.5" preserveAspectRatio="none"><rect x="0.5" y="0.5" width="25.5" height="15.5" fill="#b8b8b8"/><g fill="none" stroke="#272727" stroke-width="2"><path d="M3 3 L7.5 13.5 L12 3"/><path d="M13.5 13.5 L18 3 L22.5 13.5 M15.5 10 L20.5 10"/></g><path d="M3 21.5 L23.5 21.5" stroke="#b8b8b8" stroke-width="1.4"/><path d="M0.5 21.5 L5 18.5 L5 24.5 Z M26 21.5 L21.5 18.5 L21.5 24.5 Z" fill="#b8b8b8"/></svg>
<span class="t" style="left:1857.50px;top:431.50px;font-size:16px;line-height:20px;color:#3a96e6;transform:scaleX(0.9552);">0</span>
<div style="left:1854.50px;top:453.00px;width:72.50px;height:1.00px;background:#505050;"></div>
<svg style="left:1933.40px;top:436.00px;" width="8.80" height="9.00" viewBox="0 0 8.80 9.00" preserveAspectRatio="none"><path d="M0 0 L8.80 0 L4.40 9.00 Z" fill="#a8a8a8"/></svg>
<div style="left:1674.00px;top:464.50px;width:20.50px;height:19.50px;background:#8e8e8e;border-radius:3px;"></div>
<svg style="left:1674.00px;top:464.50px;" width="20.50" height="19.50" viewBox="0 0 20.5 19.5" preserveAspectRatio="none"><path d="M4.5 10 L8.5 14.5 L16 5" fill="none" stroke="#222" stroke-width="2.6"/></svg>
<div style="left:1722.80px;top:463.60px;width:23.40px;height:23.20px;background:#fff;"></div>
<span class="t" style="left:1755.00px;top:465.00px;font-size:16.5px;line-height:21px;color:#b0b0b0;transform:scaleX(0.9489);">Fill</span>
<svg style="left:1808.00px;top:463.00px;" width="21.50" height="21.00" viewBox="0 0 21.5 21" preserveAspectRatio="none"><path d="M13 1.8 C14.8 -0.2 17.5 -0.2 19.4 1.7 C21.3 3.6 21.3 6.3 19.3 8.1 L17.4 9.9 L18.3 10.8 L16.6 12.5 L8.6 4.5 L10.3 2.8 L11.2 3.7 Z" fill="#a8a8a8"/><path d="M10.2 7 L3 14.2 C1.2 16 0.6 18 1.6 19.4 C3 20.6 5 19.9 6.8 18.1 L14 10.9" fill="none" stroke="#b8b8b8" stroke-width="1.5"/></svg>
<div style="left:1674.00px;top:493.00px;width:20.50px;height:20.00px;box-sizing:border-box;border:2.4px solid #888;border-radius:4px;"></div>
<div style="left:1722.80px;top:492.00px;width:23.40px;height:23.40px;background:#fff;"></div>
<svg style="left:1722.80px;top:492.00px;" width="23.40" height="23.40" viewBox="0 0 23.4 23.4" preserveAspectRatio="none"><path d="M2 21.5 L21.5 2" stroke="#f41a14" stroke-width="3"/></svg>
<span class="t" style="left:1755.00px;top:493.50px;font-size:16.5px;line-height:21px;color:#b0b0b0;transform:scaleX(0.7958);">Str...</span>
<svg style="left:1808.00px;top:491.50px;" width="21.50" height="21.00" viewBox="0 0 21.5 21" preserveAspectRatio="none"><path d="M13 1.8 C14.8 -0.2 17.5 -0.2 19.4 1.7 C21.3 3.6 21.3 6.3 19.3 8.1 L17.4 9.9 L18.3 10.8 L16.6 12.5 L8.6 4.5 L10.3 2.8 L11.2 3.7 Z" fill="#a8a8a8"/><path d="M10.2 7 L3 14.2 C1.2 16 0.6 18 1.6 19.4 C3 20.6 5 19.9 6.8 18.1 L14 10.9" fill="none" stroke="#b8b8b8" stroke-width="1.5"/></svg>
<div style="left:1666.50px;top:524.50px;width:93.00px;height:38.50px;box-sizing:border-box;border:1px solid #353535;border-radius:3px;"></div>
<div style="left:1680.40px;top:541.65px;width:5.20px;height:5.20px;background:#b8b8b8;border-radius:50%;"></div>
<div style="left:1689.00px;top:541.65px;width:5.20px;height:5.20px;background:#b8b8b8;border-radius:50%;"></div>
<div style="left:1697.60px;top:541.65px;width:5.20px;height:5.20px;background:#b8b8b8;border-radius:50%;"></div>
<span class="t" style="left:1710.50px;top:533.75px;font-size:16.5px;line-height:21px;color:#b0b0b0;transform:scaleX(0.9443);">More</span>
<div style="left:1654.00px;top:572.50px;width:303.50px;height:2.30px;background:#181818;"></div>
<span class="t" style="left:1654.50px;top:585.80px;font-size:16.5px;line-height:21px;color:#bcbcbc;font-weight:700;-webkit-text-stroke:0;transform:scaleX(0.9128);">Paragraph</span>
<div style="left:1950.00px;top:590.00px;width:12.00px;height:2.00px;background:#c0c0c0;"></div>
<div style="left:1950.00px;top:594.00px;width:12.00px;height:2.00px;background:#c0c0c0;"></div>
<div style="left:1950.00px;top:598.00px;width:12.00px;height:2.00px;background:#c0c0c0;"></div>
<div style="left:1666.80px;top:621.00px;width:42.70px;height:29.00px;background:#1b1b1b;"></div>
<div style="left:1678.30px;top:625.50px;width:17.60px;height:1.50px;background:#c8c8c8;"></div>
<div style="left:1678.30px;top:630.00px;width:22.00px;height:1.50px;background:#c8c8c8;"></div>
<div style="left:1678.30px;top:634.50px;width:17.60px;height:1.50px;background:#c8c8c8;"></div>
<div style="left:1678.30px;top:639.00px;width:22.00px;height:1.50px;background:#c8c8c8;"></div>
<div style="left:1678.30px;top:643.50px;width:17.60px;height:1.50px;background:#c8c8c8;"></div>
<div style="left:1711.00px;top:621.00px;width:44.00px;height:29.00px;background:#151515;"></div>
<div style="left:1724.20px;top:625.50px;width:17.60px;height:1.50px;background:#2f80d8;"></div>
<div style="left:1721.80px;top:630.00px;width:22.40px;height:1.50px;background:#2f80d8;"></div>
<div style="left:1724.20px;top:634.50px;width:17.60px;height:1.50px;background:#2f80d8;"></div>
<div style="left:1721.80px;top:639.00px;width:22.40px;height:1.50px;background:#2f80d8;"></div>
<div style="left:1724.20px;top:643.50px;width:17.60px;height:1.50px;background:#2f80d8;"></div>
<div style="left:1756.50px;top:621.00px;width:44.50px;height:29.00px;background:#1b1b1b;"></div>
<div style="left:1771.90px;top:625.50px;width:17.60px;height:1.50px;background:#c8c8c8;"></div>
<div style="left:1767.50px;top:630.00px;width:22.00px;height:1.50px;background:#c8c8c8;"></div>
<div style="left:1771.90px;top:634.50px;width:17.60px;height:1.50px;background:#c8c8c8;"></div>
<div style="left:1767.50px;top:639.00px;width:22.00px;height:1.50px;background:#c8c8c8;"></div>
<div style="left:1771.90px;top:643.50px;width:17.60px;height:1.50px;background:#c8c8c8;"></div>
<div style="left:1801.50px;top:621.00px;width:1.00px;height:29.00px;background:#303030;"></div>
<div style="left:1847.50px;top:621.00px;width:1.00px;height:29.00px;background:#303030;"></div>
<div style="left:1893.00px;top:621.00px;width:1.00px;height:29.00px;background:#303030;"></div>
<div style="left:1938.50px;top:621.00px;width:1.00px;height:29.00px;background:#303030;"></div>
<div style="left:1666.80px;top:649.50px;width:303.70px;height:1.00px;background:#303030;"></div>
<div style="left:1801.00px;top:620.50px;width:169.50px;height:1.00px;background:#2d2d2d;"></div>
<div style="left:1814.50px;top:625.50px;width:20.00px;height:1.50px;background:#5a5a5a;"></div>
<div style="left:1814.50px;top:630.00px;width:20.00px;height:1.50px;background:#5a5a5a;"></div>
<div style="left:1814.50px;top:634.50px;width:20.00px;height:1.50px;background:#5a5a5a;"></div>
<div style="left:1814.50px;top:639.00px;width:20.00px;height:1.50px;background:#5a5a5a;"></div>
<div style="left:1814.50px;top:643.50px;width:14.00px;height:1.50px;background:#5a5a5a;"></div>
<div style="left:1860.00px;top:625.50px;width:20.00px;height:1.50px;background:#5a5a5a;"></div>
<div style="left:1860.00px;top:630.00px;width:20.00px;height:1.50px;background:#5a5a5a;"></div>
<div style="left:1860.00px;top:634.50px;width:20.00px;height:1.50px;background:#5a5a5a;"></div>
<div style="left:1860.00px;top:639.00px;width:20.00px;height:1.50px;background:#5a5a5a;"></div>
<div style="left:1863.00px;top:643.50px;width:14.00px;height:1.50px;background:#5a5a5a;"></div>
<div style="left:1906.00px;top:625.50px;width:20.00px;height:1.50px;background:#5a5a5a;"></div>
<div style="left:1906.00px;top:630.00px;width:20.00px;height:1.50px;background:#5a5a5a;"></div>
<div style="left:1906.00px;top:634.50px;width:20.00px;height:1.50px;background:#5a5a5a;"></div>
<div style="left:1906.00px;top:639.00px;width:20.00px;height:1.50px;background:#5a5a5a;"></div>
<div style="left:1912.00px;top:643.50px;width:14.00px;height:1.50px;background:#5a5a5a;"></div>
<div style="left:1951.50px;top:625.50px;width:20.00px;height:1.50px;background:#5a5a5a;"></div>
<div style="left:1951.50px;top:630.00px;width:20.00px;height:1.50px;background:#5a5a5a;"></div>
<div style="left:1951.50px;top:634.50px;width:20.00px;height:1.50px;background:#5a5a5a;"></div>
<div style="left:1951.50px;top:639.00px;width:20.00px;height:1.50px;background:#5a5a5a;"></div>
<div style="left:1951.50px;top:643.50px;width:20.00px;height:1.50px;background:#5a5a5a;"></div>
<div style="left:1970.50px;top:615.00px;width:6.20px;height:40.00px;background:#272727;"></div>
<div style="left:1666.50px;top:659.50px;width:93.00px;height:38.00px;box-sizing:border-box;border:1px solid #353535;border-radius:3px;"></div>
<div style="left:1680.40px;top:676.40px;width:5.20px;height:5.20px;background:#b8b8b8;border-radius:50%;"></div>
<div style="left:1689.00px;top:676.40px;width:5.20px;height:5.20px;background:#b8b8b8;border-radius:50%;"></div>
<div style="left:1697.60px;top:676.40px;width:5.20px;height:5.20px;background:#b8b8b8;border-radius:50%;"></div>
<span class="t" style="left:1710.50px;top:668.50px;font-size:16.5px;line-height:21px;color:#b0b0b0;transform:scaleX(0.9443);">More</span>
<div style="left:1654.00px;top:707.30px;width:303.50px;height:2.30px;background:#181818;"></div>
<span class="t" style="left:1654.50px;top:720.70px;font-size:16.5px;line-height:21px;color:#bcbcbc;font-weight:700;-webkit-text-stroke:0;transform:scaleX(0.9460);">Text Animation</span>
<svg style="left:16.80px;top:765.00px;" width="8.20" height="8.50" viewBox="0 0 7.5 7.5" preserveAspectRatio="none"><path d="M0.8 0.8 L6.7 6.7 M6.7 0.8 L0.8 6.7" stroke="#9a9a9a" stroke-width="1.3"/></svg>
<div style="left:38.50px;top:759.50px;width:14.50px;height:14.50px;background:#b49e7a;"></div>
<span class="t" style="left:69.00px;top:758.00px;font-size:16.5px;line-height:21px;color:#d0d0d0;transform:scaleX(0.9173);">Comp 1</span>
<div style="left:137.00px;top:764.00px;width:12.00px;height:2.00px;background:#b8b8b8;"></div>
<div style="left:137.00px;top:768.00px;width:12.00px;height:2.00px;background:#b8b8b8;"></div>
<div style="left:137.00px;top:772.00px;width:12.00px;height:2.00px;background:#b8b8b8;"></div>
<span class="t" style="left:20.50px;top:791.80px;font-size:21.5px;line-height:27px;color:#3397f2;font-weight:700;-webkit-text-stroke:0;transform:scaleX(0.9935);">0:00:00:00</span>
<span class="t" style="left:17.50px;top:816.80px;font-size:14.5px;line-height:18px;color:#1f74c4;transform:scaleX(0.9721);">00000 (60.00 fps)</span>
<div style="left:146.00px;top:800.00px;width:377.50px;height:26.00px;background:#141414;border-radius:4px;box-shadow:0 0 0 1px #303030;"></div>
<svg style="left:154.50px;top:804.50px;" width="26.00" height="17.00" viewBox="0 0 26 17" preserveAspectRatio="none"><circle cx="10.5" cy="6.5" r="5" fill="none" stroke="#b8b8b8" stroke-width="1.7"/><path d="M7 10.3 L1.2 15.8" stroke="#b8b8b8" stroke-width="2" stroke-linecap="round"/><path d="M16.5 10.5 L24 10.5 L20.2 14.5 Z" fill="#b8b8b8"/></svg>
<svg style="left:546.50px;top:802.50px;" width="25.00" height="20.00" viewBox="0 0 25 20" preserveAspectRatio="none"><g fill="#b4b4b4"><rect x="3" y="2" width="7" height="4"/><rect x="15" y="0.5" width="7.5" height="5"/><rect x="15" y="8.5" width="7.5" height="5"/><path d="M0 3.5 L15 3.5 L15 4.7 L12.8 4.7 L12.8 10.5 L15 10.5 L15 11.7 L11.6 11.7 L11.6 4.7 L0 4.7 Z"/><path d="M17 16 L24.5 16 L20.7 20 Z"/></g></svg>
<div style="left:595.00px;top:814.50px;width:23.00px;height:6.50px;background:#4a4a4a;"></div>
<svg style="left:596.50px;top:803.50px;" width="20.00" height="16.00" viewBox="0 0 18 15" preserveAspectRatio="none"><path d="M2 8 C2 -1.5 16 -1.5 16 8 Z" fill="#b4b4b4"/><rect x="0" y="9.8" width="5" height="1.5" fill="#b4b4b4"/><rect x="13" y="9.8" width="5" height="1.5" fill="#b4b4b4"/><path d="M7 7 L11 7 L11 13 C11 15.6 7 15.6 7 13 Z" fill="#b4b4b4"/><circle cx="6" cy="4.6" r="1.4" fill="#272727"/><circle cx="12" cy="4.6" r="1.4" fill="#272727"/></svg>
<svg style="left:633.50px;top:802.50px;" width="21.00" height="20.00" viewBox="0 0 20.5 19" preserveAspectRatio="none"><path d="M0 5 L3 5 L3 16 L14 16 L14 19 L0 19 Z" fill="#b4b4b4"/><rect x="4.5" y="0" width="16" height="14.5" fill="#b4b4b4"/><g fill="#272727"><rect x="5.5" y="1.5" width="1.8" height="2"/><rect x="5.5" y="5" width="1.8" height="2"/><rect x="5.5" y="8.5" width="1.8" height="2"/><rect x="5.5" y="11.5" width="1.8" height="1.8"/><rect x="17.7" y="1.5" width="1.8" height="2"/><rect x="17.7" y="5" width="1.8" height="2"/><rect x="17.7" y="8.5" width="1.8" height="2"/><rect x="17.7" y="11.5" width="1.8" height="1.8"/><rect x="9" y="6.4" width="7" height="1.6"/></g></svg>
<svg style="left:670.50px;top:802.00px;" width="21.00" height="20.00" viewBox="0 0 20.5 19.5" preserveAspectRatio="none"><g fill="none" stroke="#b4b4b4" stroke-width="1.5"><circle cx="7.5" cy="12" r="6.6"/><circle cx="10" cy="9.8" r="6.6"/></g><circle cx="13" cy="7.3" r="6.8" fill="#6a6a6a" stroke="#b4b4b4" stroke-width="1.5"/></svg>
<svg style="left:717.00px;top:801.50px;" width="25.00" height="22.00" viewBox="0 0 25 22" preserveAspectRatio="none"><rect x="2.5" y="3.5" width="20" height="17" fill="none" stroke="#b4b4b4" stroke-width="1.5"/><path d="M3.5 5 C12 5 12 19 21.5 19" fill="none" stroke="#b4b4b4" stroke-width="1.5"/><g fill="#b4b4b4"><rect x="7" y="0.5" width="1.4" height="3"/><rect x="12" y="0.5" width="1.4" height="3"/><rect x="17" y="0.5" width="1.4" height="3"/><rect x="0" y="7" width="2.5" height="1.4"/><rect x="0" y="12" width="2.5" height="1.4"/><rect x="0" y="17" width="2.5" height="1.4"/></g></svg>
<div style="left:3.00px;top:837.50px;width:761.00px;height:1.50px;background:#1e1e1e;"></div>
<svg style="left:11.00px;top:848.50px;" width="15.00" height="9.50" viewBox="0 0 15 9.5" preserveAspectRatio="none"><path d="M0 4.75 C4 -1.5 11 -1.5 15 4.75 C11 11 4 11 0 4.75 Z" fill="#b4b4b4"/><circle cx="7.5" cy="4.4" r="2.9" fill="#2a2a2a"/><circle cx="7.5" cy="4.4" r="1.5" fill="#b4b4b4"/></svg>
<svg style="left:31.00px;top:844.50px;" width="17.00" height="17.00" viewBox="0 0 17 17" preserveAspectRatio="none"><path d="M0 5.5 L3.5 5.5 L8 1 L8 16 L3.5 11.5 L0 11.5 Z" fill="#b4b4b4"/><g fill="none" stroke="#b4b4b4" stroke-width="1.5"><path d="M10 5.2 C11.8 7 11.8 10 10 11.8"/><path d="M12 2.2 C15.8 5.5 15.8 11.5 12 14.8"/></g></svg>
<div style="left:55.50px;top:848.00px;width:10.50px;height:10.50px;background:#b4b4b4;border-radius:50%;"></div>
<svg style="left:75.50px;top:844.50px;" width="14.00" height="16.50" viewBox="0 0 14 16.5" preserveAspectRatio="none"><path d="M3 7 L3 4.5 C3 -0.5 11 -0.5 11 4.5 L11 7" fill="none" stroke="#b4b4b4" stroke-width="2"/><rect x="0" y="7" width="14" height="9.5" rx="1" fill="#b4b4b4"/><circle cx="7" cy="10.8" r="1.6" fill="#272727"/><rect x="6.3" y="11" width="1.4" height="3.4" fill="#272727"/></svg>
<div style="left:99.00px;top:844.00px;width:1.60px;height:17.00px;background:#131313;"></div>
<svg style="left:119.00px;top:844.50px;" width="18.00" height="18.00" viewBox="0 0 18.5 18.5" preserveAspectRatio="none"><path d="M1.5 1 L9 1 L17.5 9.5 L10 17.5 L1.5 9 Z M5.2 3.2 A1.8 1.8 0 1 0 5.21 3.2 Z" fill="#b4b4b4" fill-rule="evenodd"/></svg>
<div style="left:144.50px;top:844.00px;width:1.60px;height:17.00px;background:#131313;"></div>
<span class="t" style="left:153.00px;top:845.00px;font-size:13.5px;line-height:17px;color:#b0b0b0;transform:scaleX(0.9323);">#</span>
<div style="left:191.50px;top:844.00px;width:1.60px;height:17.00px;background:#131313;"></div>
<span class="t" style="left:200.50px;top:844.50px;font-size:14.5px;line-height:18px;color:#b0b0b0;transform:scaleX(0.8686);">Source Name</span>
<div style="left:377.50px;top:844.00px;width:1.60px;height:17.00px;background:#131313;"></div>
<svg style="left:385.00px;top:846.50px;" width="18.00" height="14.00" viewBox="0 0 18 15" preserveAspectRatio="none"><path d="M2 8 C2 -1.5 16 -1.5 16 8 Z" fill="#b4b4b4"/><rect x="0" y="9.8" width="5" height="1.5" fill="#b4b4b4"/><rect x="13" y="9.8" width="5" height="1.5" fill="#b4b4b4"/><path d="M7 7 L11 7 L11 13 C11 15.6 7 15.6 7 13 Z" fill="#b4b4b4"/><circle cx="6" cy="4.6" r="1.4" fill="#272727"/><circle cx="12" cy="4.6" r="1.4" fill="#272727"/></svg>
<svg style="left:408.50px;top:846.00px;" width="15.00" height="15.00" viewBox="0 0 15 15" preserveAspectRatio="none"><circle cx="7.5" cy="7.5" r="2.7" fill="none" stroke="#b4b4b4" stroke-width="1.4"/><g stroke="#b4b4b4" stroke-width="1.4"><path d="M7.5 0 L7.5 3.4 M7.5 11.6 L7.5 15 M0 7.5 L3.4 7.5 M11.6 7.5 L15 7.5 M2.2 2.2 L4.6 4.6 M10.4 10.4 L12.8 12.8 M2.2 12.8 L4.6 10.4 M10.4 4.6 L12.8 2.2"/></g></svg>
<svg style="left:429.00px;top:845.50px;" width="15.00" height="15.00" viewBox="0 0 15 15" preserveAspectRatio="none"><g fill="#b4b4b4"><rect x="0" y="0" width="3" height="3"/><rect x="3" y="3" width="3" height="3"/><rect x="6" y="6" width="3" height="3"/><rect x="9" y="9" width="3" height="3"/><rect x="12" y="12" width="3" height="3"/></g></svg>
<span class="t" style="left:450.50px;top:841.50px;font-size:18px;line-height:22px;color:#c0c0c0;transform:scaleX(1.0714);font-style:italic;">fx</span>
<svg style="left:470.50px;top:845.00px;" width="18.00" height="16.50" viewBox="0 0 20.5 19" preserveAspectRatio="none"><path d="M0 5 L3 5 L3 16 L14 16 L14 19 L0 19 Z" fill="#b4b4b4"/><rect x="4.5" y="0" width="16" height="14.5" fill="#b4b4b4"/><g fill="#272727"><rect x="5.5" y="1.5" width="1.8" height="2"/><rect x="5.5" y="5" width="1.8" height="2"/><rect x="5.5" y="8.5" width="1.8" height="2"/><rect x="5.5" y="11.5" width="1.8" height="1.8"/><rect x="17.7" y="1.5" width="1.8" height="2"/><rect x="17.7" y="5" width="1.8" height="2"/><rect x="17.7" y="8.5" width="1.8" height="2"/><rect x="17.7" y="11.5" width="1.8" height="1.8"/><rect x="9" y="6.4" width="7" height="1.6"/></g></svg>
<svg style="left:492.50px;top:844.00px;" width="18.50" height="18.00" viewBox="0 0 20.5 19.5" preserveAspectRatio="none"><g fill="none" stroke="#b4b4b4" stroke-width="1.5"><circle cx="7.5" cy="12" r="6.6"/><circle cx="10" cy="9.8" r="6.6"/></g><circle cx="13" cy="7.3" r="6.8" fill="#6a6a6a" stroke="#b4b4b4" stroke-width="1.5"/></svg>
<svg style="left:515.00px;top:846.00px;" width="15.00" height="15.00" viewBox="0 0 15 15" preserveAspectRatio="none"><circle cx="7.5" cy="7.5" r="6.7" fill="none" stroke="#b4b4b4" stroke-width="1.5"/><path d="M2.8 12.2 A6.7 6.7 0 0 0 12.2 2.8 Z" fill="#b4b4b4"/></svg>
<svg style="left:538.00px;top:846.00px;" width="13.50" height="14.50" viewBox="0 0 13.5 14.5" preserveAspectRatio="none"><g fill="none" stroke="#b4b4b4" stroke-width="1.4" stroke-linejoin="round"><path d="M6.75 0.8 L12.7 3.8 L12.7 10.8 L6.75 13.8 L0.8 10.8 L0.8 3.8 Z"/><path d="M0.8 3.8 L6.75 6.8 L12.7 3.8 M6.75 6.8 L6.75 13.8"/></g></svg>
<div style="left:573.50px;top:844.00px;width:1.60px;height:17.00px;background:#131313;"></div>
<span class="t" style="left:582.50px;top:844.50px;font-size:14.5px;line-height:18px;color:#b0b0b0;transform:scaleX(0.9075);">Parent &amp; Link</span>
<div style="left:741.00px;top:844.00px;width:1.60px;height:17.00px;background:#131313;"></div>
<div style="left:3.00px;top:867.00px;width:761.00px;height:23.50px;background:#4a4a4a;"></div>
<div style="left:9.00px;top:869.00px;width:18.00px;height:18.50px;background:#3a3a3a;"></div>
<svg style="left:11.00px;top:873.50px;" width="15.00" height="9.50" viewBox="0 0 15 9.5" preserveAspectRatio="none"><path d="M0 4.75 C4 -1.5 11 -1.5 15 4.75 C11 11 4 11 0 4.75 Z" fill="#d0d0d0"/><circle cx="7.5" cy="4.4" r="2.9" fill="#2a2a2a"/><circle cx="7.5" cy="4.4" r="1.5" fill="#d0d0d0"/></svg>
<div style="left:52.00px;top:869.00px;width:18.00px;height:18.50px;background:#3a3a3a;"></div>
<div style="left:73.00px;top:869.00px;width:18.50px;height:18.50px;background:#3a3a3a;"></div>
<svg style="left:108.00px;top:872.00px;" width="6.50" height="13.00" viewBox="0 0 6.5 13" preserveAspectRatio="none"><path d="M1 1 L5.5 6.5 L1 12" fill="none" stroke="#c0c0c0" stroke-width="1.5"/></svg>
<div style="left:124.50px;top:870.00px;width:17.00px;height:17.00px;background:#b5373a;"></div>
<span class="t" style="left:155.50px;top:869.00px;font-size:16px;line-height:20px;color:#e0e0e0;font-weight:700;-webkit-text-stroke:0;transform:scaleX(0.7866);">1</span>
<span class="t" style="left:199.00px;top:866.50px;font-size:19px;line-height:24px;color:#d8d8d8;font-family:'Liberation Serif',serif;transform:scaleX(0.9478);">T</span>
<div style="left:218.50px;top:867.00px;width:159.00px;height:23.50px;background:#a9a9a9;"></div>
<span class="t" style="left:224.00px;top:868.50px;font-size:16.5px;line-height:21px;color:#1c1c1c;transform:scaleX(0.8485);">RETRO</span>
<div style="left:384.80px;top:869.00px;width:18.60px;height:18.50px;background:#3a3a3a;"></div>
<svg style="left:385.50px;top:872.00px;" width="17.50" height="13.50" viewBox="0 0 18 15" preserveAspectRatio="none"><path d="M2 8 C2 -1.5 16 -1.5 16 8 Z" fill="#d0d0d0"/><rect x="0" y="9.8" width="5" height="1.5" fill="#d0d0d0"/><rect x="13" y="9.8" width="5" height="1.5" fill="#d0d0d0"/><path d="M7 7 L11 7 L11 13 C11 15.6 7 15.6 7 13 Z" fill="#d0d0d0"/><circle cx="6" cy="4.6" r="1.4" fill="#272727"/><circle cx="12" cy="4.6" r="1.4" fill="#272727"/></svg>
<div style="left:406.50px;top:869.00px;width:18.30px;height:18.50px;background:#3a3a3a;"></div>
<svg style="left:408.50px;top:871.00px;" width="14.50" height="14.50" viewBox="0 0 15 15" preserveAspectRatio="none"><circle cx="7.5" cy="7.5" r="2.7" fill="none" stroke="#8a8a8a" stroke-width="1.4"/><g stroke="#8a8a8a" stroke-width="1.4"><path d="M7.5 0 L7.5 3.4 M7.5 11.6 L7.5 15 M0 7.5 L3.4 7.5 M11.6 7.5 L15 7.5 M2.2 2.2 L4.6 4.6 M10.4 10.4 L12.8 12.8 M2.2 12.8 L4.6 10.4 M10.4 4.6 L12.8 2.2"/></g></svg>
<div style="left:428.00px;top:869.00px;width:18.30px;height:18.50px;background:#3a3a3a;"></div>
<svg style="left:429.50px;top:870.50px;" width="15.50" height="16.00" viewBox="0 0 15.5 16" preserveAspectRatio="none"><path d="M1.5 14.5 L14 1.5" stroke="#c8c8c8" stroke-width="1.7"/></svg>
<div style="left:492.40px;top:869.00px;width:18.60px;height:18.50px;background:#3a3a3a;"></div>
<div style="left:513.60px;top:869.00px;width:18.40px;height:18.50px;background:#3a3a3a;"></div>
<div style="left:535.00px;top:869.00px;width:18.60px;height:18.50px;background:#3a3a3a;"></div>
<svg style="left:581.50px;top:870.00px;" width="17.50" height="16.00" viewBox="0 0 17.5 16" preserveAspectRatio="none"><path d="M14.02 2.07 L14.83 2.92 L15.48 3.86 L15.96 4.87 L16.26 5.92 L16.38 6.98 L16.32 8.04 L16.08 9.07 L15.67 10.05 L15.11 10.95 L14.40 11.75 L13.58 12.45 L12.66 13.03 L11.66 13.47 L10.61 13.77 L9.53 13.92 L8.45 13.93 L7.39 13.80 L6.38 13.53 L5.43 13.13 L4.58 12.62 L3.83 12.01 L3.19 11.31 L2.69 10.54 L2.33 9.73 L2.12 8.88 L2.05 8.03 L2.13 7.19 L2.34 6.38 L2.69 5.62 L3.16 4.92 L3.73 4.30 L4.39 3.77 L5.13 3.34 L5.92 3.01 L6.74 2.80 L7.58 2.71 L8.42 2.72 L9.23 2.85 L10.00 3.08 L10.71 3.40 L11.35 3.81 L11.90 4.30 L12.36 4.84 L12.71 5.43 L12.96 6.05 L13.09 6.69 L13.12 7.32 L13.03 7.94 L12.85 8.54 L12.56 9.09 L12.20 9.59 L11.76 10.03 L11.26 10.39 L10.71 10.68 L10.13 10.89 L9.54 11.02 L8.94 11.06 L8.35 11.02 L7.78 10.91 L7.25 10.73 L6.77 10.48 L6.35 10.17 L5.99 9.82 L5.71 9.44 L5.50 9.03 L5.36 8.60 L5.30 8.17 L5.32 7.75 L5.41 7.35 L5.56 6.97 L5.77 6.63 L6.03 6.33 L6.33 6.07 L6.66 5.87 L7.02 5.72 L7.38 5.62 L7.75 5.57 L8.11 5.58 L8.45 5.63 L8.77 5.73 L9.06 5.86 L9.31 6.03 L9.52 6.23 L9.68 6.44 L9.80 6.66 L9.88 6.89 L9.90 7.12 L9.89 7.34 L9.84 7.54 L9.76 7.73" fill="none" stroke="#a0a0a0" stroke-width="1.45"/></svg>
<div style="left:608.00px;top:869.00px;width:128.00px;height:19.00px;background:#1e1e1e;border-radius:2px;"></div>
<span class="t" style="left:617.50px;top:868.50px;font-size:16.5px;line-height:21px;color:#e4e4e4;transform:scaleX(0.9253);">None</span>
<svg style="left:718.00px;top:874.48px;" width="11.00" height="8.05" viewBox="0 0 11.00 8.05" preserveAspectRatio="none"><path d="M0.8 1.2 L5.50 6.45 L10.20 1.2" fill="none" stroke="#d0d0d0" stroke-width="1.6"/></svg>
<div style="left:764.00px;top:838.50px;width:1.50px;height:357.50px;background:#141414;"></div>
<div style="left:765.50px;top:838.50px;width:10.50px;height:357.50px;background:#2b2b2b;"></div>
<div style="left:776.00px;top:890.50px;width:1182.00px;height:305.50px;background:#363636;"></div>
<div style="left:1958.00px;top:866.00px;width:10.70px;height:330.00px;background:#2c2c2c;"></div>
<div style="left:765.00px;top:795.30px;width:1204.50px;height:14.30px;background:#0e0e0e;border-radius:7px;"></div>
<div style="left:775.50px;top:796.80px;width:1183.50px;height:11.40px;background:#6a6a6a;"></div>
<div style="left:765.50px;top:796.80px;width:8.80px;height:11.40px;background:#2f8ff0;border-radius:6px 0 0 6px;"></div>
<div style="left:775.50px;top:796.80px;width:2.30px;height:11.40px;background:#2f8ff0;"></div>
<div style="left:1959.00px;top:796.80px;width:9.50px;height:11.40px;background:#2f8ff0;border-radius:0 6px 6px 0;"></div>
<div style="left:765.50px;top:809.60px;width:1203.20px;height:28.90px;background:#242424;"></div>
<span class="t" style="left:873.90px;top:812.00px;font-size:14.5px;line-height:18px;color:#a6a6a6;transform:scaleX(0.9947);">00:30f</span>
<div style="left:893.50px;top:830.50px;width:1.40px;height:8.00px;background:#a0a0a0;"></div>
<span class="t" style="left:992.10px;top:812.00px;font-size:14.5px;line-height:18px;color:#a6a6a6;transform:scaleX(0.9947);">01:00f</span>
<div style="left:1011.70px;top:826.00px;width:1.40px;height:12.50px;background:#a0a0a0;"></div>
<span class="t" style="left:1110.30px;top:812.00px;font-size:14.5px;line-height:18px;color:#a6a6a6;transform:scaleX(0.9947);">01:30f</span>
<div style="left:1129.90px;top:830.50px;width:1.40px;height:8.00px;background:#a0a0a0;"></div>
<span class="t" style="left:1228.50px;top:812.00px;font-size:14.5px;line-height:18px;color:#a6a6a6;transform:scaleX(0.9947);">02:00f</span>
<div style="left:1248.10px;top:826.00px;width:1.40px;height:12.50px;background:#a0a0a0;"></div>
<span class="t" style="left:1346.70px;top:812.00px;font-size:14.5px;line-height:18px;color:#a6a6a6;transform:scaleX(0.9947);">02:30f</span>
<div style="left:1366.30px;top:830.50px;width:1.40px;height:8.00px;background:#a0a0a0;"></div>
<span class="t" style="left:1464.90px;top:812.00px;font-size:14.5px;line-height:18px;color:#a6a6a6;transform:scaleX(0.9947);">03:00f</span>
<div style="left:1484.50px;top:826.00px;width:1.40px;height:12.50px;background:#a0a0a0;"></div>
<span class="t" style="left:1583.10px;top:812.00px;font-size:14.5px;line-height:18px;color:#a6a6a6;transform:scaleX(0.9947);">03:30f</span>
<div style="left:1602.70px;top:830.50px;width:1.40px;height:8.00px;background:#a0a0a0;"></div>
<span class="t" style="left:1701.30px;top:812.00px;font-size:14.5px;line-height:18px;color:#a6a6a6;transform:scaleX(0.9947);">04:00f</span>
<div style="left:1720.90px;top:826.00px;width:1.40px;height:12.50px;background:#a0a0a0;"></div>
<span class="t" style="left:1819.50px;top:812.00px;font-size:14.5px;line-height:18px;color:#a6a6a6;transform:scaleX(0.9947);">04:30f</span>
<div style="left:1839.10px;top:830.50px;width:1.40px;height:8.00px;background:#a0a0a0;"></div>
<span class="t" style="left:764.50px;top:811.50px;font-size:14.5px;line-height:18px;color:#a6a6a6;transform:scaleX(0.9612);">0:00f</span>
<div style="left:1930px;top:810px;width:38.7px;height:28px;overflow:hidden;">
<span class="t" style="left:8.00px;top:2.00px;font-size:14.5px;line-height:18px;color:#a6a6a6;transform:scaleX(0.9922);">05:00f</span>
</div>
<div style="left:1958.30px;top:826.00px;width:1.40px;height:12.50px;background:#a0a0a0;"></div>
<div style="left:765.50px;top:837.80px;width:1203.20px;height:23.50px;background:#0f0f0f;"></div>
<div style="left:775.50px;top:839.20px;width:1183.50px;height:21.00px;background:#626262;"></div>
<div style="left:766.80px;top:839.20px;width:7.80px;height:21.00px;background:#2f8ff0;border-radius:5px 0 0 5px;"></div>
<div style="left:1959.60px;top:839.20px;width:7.70px;height:21.00px;background:#2f8ff0;border-radius:0 5px 5px 0;"></div>
<div style="left:776.00px;top:861.20px;width:1182.00px;height:5.00px;background:#1fc02a;"></div>
<div style="left:765.50px;top:866.00px;width:10.50px;height:24.50px;background:#3e3e3e;"></div>
<div style="left:765.50px;top:866.00px;width:1203.20px;height:1.20px;background:#2a2a2a;"></div>
<div style="left:776.00px;top:867.20px;width:1182.00px;height:22.80px;background:#ae5053;background-image:linear-gradient(#c27a7c 0,#c27a7c 1px,rgba(0,0,0,0) 1px);"></div>
<div style="left:1958.00px;top:867.20px;width:10.70px;height:22.80px;background:#474747;"></div>
<svg style="left:776px;top:868.2px;" width="1182" height="21.8"><filter id="nz" x="0" y="0" width="100%" height="100%"><feTurbulence type="fractalNoise" baseFrequency="0.55" numOctaves="2" seed="4"/><feColorMatrix type="matrix" values="0 0 0 0 1  0 0 0 0 0.85  0 0 0 0 0.85  1.6 0 0 0 -0.62"/></filter><rect width="1182" height="21.8" filter="url(#nz)" opacity="0.22"/></svg>
<svg style="left:767.60px;top:817.30px;" width="16.80" height="19.60" viewBox="0 0 16.8 19.6" preserveAspectRatio="none"><path d="M0.3 0 L16.5 0 L16.5 7.2 L8.4 19.6 L0.3 7.2 Z" fill="#2f8ff0"/><rect x="7.9" y="8" width="1" height="11" fill="#9aa4b0"/></svg>
<div style="left:775.30px;top:834.00px;width:1.40px;height:362.00px;background:#2f8ff0;"></div>
<svg style="left:1973.50px;top:841.50px;" width="16.50" height="20.50" viewBox="0 0 16.5 21" preserveAspectRatio="none"><path d="M0 0 L16.5 0 L16.5 13.5 L8.25 21 L0 13.5 Z" fill="#a8a8a8"/></svg>
<svg style="left:1969.00px;top:871.50px;" width="21.50" height="19.50" viewBox="0 0 21.5 19.5" preserveAspectRatio="none"><path d="M9.5 3 L19.5 3 L19.5 12.5 L12 12.5 Z" fill="#b0b0b0"/><path d="M10.5 1 L1 15.5 L6 15.5" fill="none" stroke="#b0b0b0" stroke-width="1.5"/><circle cx="9.5" cy="14" r="4" fill="#272727" stroke="#b0b0b0" stroke-width="1.6"/></svg>
<div style="left:1968.70px;top:866.50px;width:25.30px;height:1.00px;background:#202020;"></div>
<div style="left:3.00px;top:1195.50px;width:914.50px;height:1.50px;background:#161616;"></div>
<div style="left:917.50px;top:1197.00px;width:1051.50px;height:25.00px;background:#212121;"></div>
<div style="left:8.00px;top:1198.50px;width:25.00px;height:22.00px;background:#1c1c1c;border-radius:3px;"></div>
<svg style="left:12.50px;top:1201.50px;" width="16.50" height="16.50" viewBox="0 0 16.5 16.5" preserveAspectRatio="none"><g fill="none" stroke="#2f8ff0" stroke-width="1.5"><rect x="0.8" y="0.8" width="10" height="10"/><rect x="3.3" y="3.3" width="10" height="10"/><rect x="5.8" y="5.8" width="10" height="10"/></g><circle cx="10.8" cy="10.8" r="2" fill="#2f8ff0"/></svg>
<svg style="left:39.00px;top:1200.50px;" width="17.50" height="17.50" viewBox="0 0 17.5 17.5" preserveAspectRatio="none"><g fill="none" stroke="#b4b4b4" stroke-width="1.5"><circle cx="6.5" cy="6.5" r="5.6"/><rect x="7.5" y="7.5" width="9" height="9" fill="#272727"/></g></svg>
<span class="t" style="left:66.50px;top:1198.00px;font-size:16px;line-height:20px;color:#b8b8b8;font-weight:700;-webkit-text-stroke:0;transform:scaleX(0.9469);">{ }</span>
<svg style="left:93.50px;top:1201.00px;" width="18.00" height="16.00" viewBox="0 0 18 16" preserveAspectRatio="none"><circle cx="6" cy="7" r="5.4" fill="#b4b4b4"/><path d="M1 15 C3 11 12 11 15.5 13 L17.5 15 Z" fill="#b4b4b4"/><path d="M13 2 L17 2 M15 1 L15 6 M12.5 4.5 L17.5 3.8" stroke="#b4b4b4" stroke-width="1.2"/></svg>
<span class="t" style="left:152.50px;top:1199.50px;font-size:16px;line-height:20px;color:#b0b0b0;transform:scaleX(0.9559);">Frame Render Time</span>
<span class="t" style="left:296.50px;top:1199.50px;font-size:16px;line-height:20px;color:#3ec9a0;font-weight:700;-webkit-text-stroke:0;transform:scaleX(0.9652);">14ms</span>
<div style="left:382.50px;top:1199.00px;width:190.00px;height:21.50px;background:#1e1e1e;border-radius:3px;box-shadow:0 0 0 1px #333;"></div>
<span class="t" style="left:390.00px;top:1199.50px;font-size:16px;line-height:20px;color:#b0b0b0;transform:scaleX(0.9832);">Toggle Switches / Modes</span>
<svg style="left:772.50px;top:1204.50px;" width="14.00" height="8.00" viewBox="0 0 14 8" preserveAspectRatio="none"><path d="M0 8 L5 1.5 L7.5 4.5 L9.5 2.5 L14 8 Z" fill="#b4b4b4"/></svg>
<div style="left:816.00px;top:1209.00px;width:55.00px;height:2.00px;background:#3e3e3e;border-radius:1px;"></div>
<div style="left:802.50px;top:1203.50px;width:14.00px;height:14.00px;box-sizing:border-box;border:2.6px solid #b4b4b4;border-radius:50%;"></div>
<svg style="left:887.50px;top:1202.50px;" width="24.00" height="11.50" viewBox="0 0 24 11.5" preserveAspectRatio="none"><path d="M0 11.5 L7 1.5 L11 7 L15 0.5 L24 11.5 Z" fill="#b4b4b4"/></svg>
</div></body></html>
